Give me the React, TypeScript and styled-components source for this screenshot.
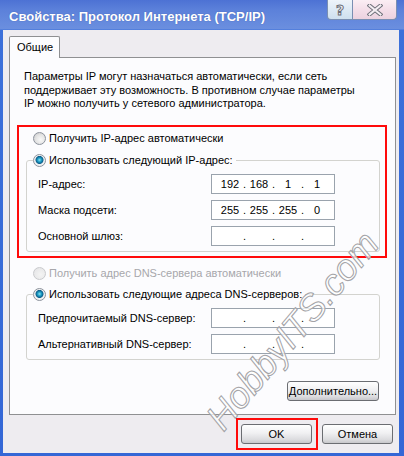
import React from "react";
import styled, { createGlobalStyle } from "styled-components";

const Global = createGlobalStyle`
  html, body { margin: 0; padding: 0; background: #ffffff; }
  body { font-family: "Liberation Sans", Arial, sans-serif; font-size: 11px; color: #000; }
  #root { width: 404px; height: 456px; }
`;

const Frame = styled.div`
  position: relative;
  width: 404px;
  height: 456px;
  box-sizing: border-box;
  padding: 0 5px 3px 3px;
  display: flex;
  flex-direction: column;
  overflow: hidden;
  background: linear-gradient(
    180deg,
    #4d72d4 0px,
    #5c81da 10px,
    #6b8fdf 29px,
    #3c70da 30px,
    #3467d6 100%
  );
`;

const TitleBar = styled.div`
  height: 30px;
  display: flex;
  align-items: flex-start;
  flex-shrink: 0;
`;

const TitleText = styled.div`
  margin: 9px 0 0 6px;
  font-family: "Liberation Sans", Arial, sans-serif;
  font-weight: bold;
  font-size: 13px;
  line-height: 15px;
  color: #ffffff;
  text-shadow: 0 0 1px rgba(30, 50, 120, 0.5);
  white-space: nowrap;
`;

const CaptionButtons = styled.div`
  margin-left: auto;
  margin-right: 2px;
  display: flex;
`;

const CaptionButton = styled.div<{ $kind: "help" | "close" }>`
  width: ${(p) => (p.$kind === "help" ? 26 : 44)}px;
  height: 20px;
  box-sizing: border-box;
  border: 1px solid #7a8fb2;
  border-top: none;
  ${(p) => (p.$kind === "close" ? "border-left: none;" : "")}
  border-radius: ${(p) => (p.$kind === "help" ? "0 0 0 4px" : "0 0 4px 0")};
  background: ${(p) =>
    p.$kind === "help"
      ? "linear-gradient(180deg, #eef4fa 0%, #dce9f4 55%, #cfe0ef 100%)"
      : "linear-gradient(180deg, #fbeef4 0%, #f3dde8 55%, #ecd2df 100%)"};
  display: flex;
  align-items: center;
  justify-content: center;
  font-family: "DejaVu Sans", sans-serif;
  font-weight: bold;
  font-size: 14px;
  color: #f4f6fa;
  -webkit-text-stroke: 1px #6d6f78;
`;

const Body = styled.div`
  flex: 1;
  background: #eeecf0;
  padding: 6px 3px 3px 6px;
  display: flex;
  flex-direction: column;
`;

const TabStrip = styled.div`
  display: flex;
  height: 22px;
  margin-bottom: -1px;
  position: relative;
  z-index: 1;
`;

const Tab = styled.div`
  width: 51px;
  box-sizing: border-box;
  border: 1px solid #8f9092;
  border-bottom: none;
  border-radius: 2px 2px 0 0;
  background: #fcfcfe;
  padding-left: 7px;
  line-height: 21px;
  font-size: 11px;
`;

const Panel = styled.div`
  border: 1px solid #8f9092;
  background: #fcfcfe;
  padding: 12px 8px 13px 7px;
  display: flex;
  flex-direction: column;
`;

const Intro = styled.p`
  margin: 0 0 14.5px 7px;
  line-height: 13.5px;
  font-size: 11px;
`;

const Annotation = styled.div`
  border: 2px solid #ff0a0a;
  padding: 4px 5px 4px 7px;
  display: flex;
  flex-direction: column;
`;

const RadioRow = styled.label<{ $indent: number; $top?: number; $disabled?: boolean }>`
  display: flex;
  align-items: center;
  gap: 3px;
  height: 14px;
  margin-left: ${(p) => p.$indent}px;
  margin-top: ${(p) => p.$top ?? 0}px;
  color: ${(p) => (p.$disabled ? "#a7a7ab" : "#000")};
  font-size: 11px;
  white-space: nowrap;
`;

const RadioDot = styled.span<{ $checked?: boolean; $disabled?: boolean }>`
  width: 13px;
  height: 13px;
  box-sizing: border-box;
  border-radius: 50%;
  flex-shrink: 0;
  border: 1px solid ${(p) => (p.$disabled ? "#c9cacd" : "#8c929c")};
  background: ${(p) =>
    p.$checked
      ? "radial-gradient(circle at 50% 45%, #8fe0f2 0px, #1a9cc4 2px, #0d5d8a 3.6px, #eef0f2 4.4px, #f6f6f6 100%)"
      : p.$disabled
      ? "radial-gradient(circle at 60% 60%, #f4f4f4 0px, #e2e2e4 100%)"
      : "radial-gradient(circle at 60% 60%, #f8f8f8 0px, #e4e4e4 50%, #c4c4c6 100%)"};
`;

const Group = styled.fieldset<{ $top: number; $side?: number; $right?: number }>`
  margin: ${(p) => p.$top}px ${(p) => p.$right ?? 0}px 0 ${(p) => p.$side ?? 0}px;
  padding: 7px 0 5px 0;
  border: 1px solid #d3d3cf;
  border-radius: 3px;
  min-width: 0;
  display: flex;
  flex-direction: column;
  gap: 6px;
`;

const GroupLegend = styled.legend`
  margin-left: 6px;
  padding: 0 3px 0 0;
  display: flex;
  align-items: center;
  gap: 3px;
  height: 14px;
  font-size: 11px;
  white-space: nowrap;
`;

const FieldRow = styled.div`
  display: flex;
  align-items: center;
  height: 20px;
  padding-left: 11px;
`;

const FieldLabel = styled.span`
  width: 173px;
  flex-shrink: 0;
  font-size: 11px;
  white-space: nowrap;
`;

const IpBox = styled.div`
  width: 124px;
  height: 20px;
  box-sizing: border-box;
  border: 1px solid #9aa3ad;
  background: #ffffff;
  padding-left: 7px;
  display: flex;
  align-items: center;
  font-size: 11px;
`;

const Octet = styled.span`
  width: 22px;
  text-align: center;
`;

const Dot = styled.span`
  width: 7px;
  text-align: center;
`;

const PushButton = styled.div<{ $w: number }>`
  width: ${(p) => p.$w}px;
  height: 20px;
  box-sizing: border-box;
  border: 1px solid #6b6d72;
  border-radius: 3px;
  background: linear-gradient(180deg, #ffffff 0%, #f0f0f2 45%, #dcdcdf 80%, #c7c7cb 100%);
  display: flex;
  align-items: center;
  justify-content: center;
  font-size: 11px;
  white-space: nowrap;
`;

const MoreRow = styled.div`
  display: flex;
  justify-content: flex-end;
  margin-top: 21px;
  padding-right: 8px;
`;

const Footer = styled.div`
  margin-top: 3px;
  display: flex;
  justify-content: flex-end;
  align-items: center;
  gap: 4px;
  padding-right: 3px;
`;

const OkMark = styled.div`
  border: 2px solid #ff0a0a;
  padding: 4px 4px 4px 3px;
  display: flex;
`;

const WatermarkAnchor = styled.div`
  position: absolute;
  left: 293px;
  top: 331px;
  width: 0;
  height: 0;
  pointer-events: none;
`;

const WatermarkText = styled.span`
  position: absolute;
  left: 0;
  top: 0;
  transform: translate(-50%, -50%) rotate(-50deg);
  font-family: "Liberation Sans", Arial, sans-serif;
  font-style: italic;
  font-size: 37px;
  color: rgba(255, 255, 255, 0.75);
  -webkit-text-stroke: 1px #a2a2a6;
  white-space: nowrap;
`;

const IpField: React.FC<{ parts?: string[] }> = ({ parts = ["", "", "", ""] }) => (
  <IpBox>
    <Octet>{parts[0]}</Octet>
    <Dot>.</Dot>
    <Octet>{parts[1]}</Octet>
    <Dot>.</Dot>
    <Octet>{parts[2]}</Octet>
    <Dot>.</Dot>
    <Octet>{parts[3]}</Octet>
  </IpBox>
);

export default function App() {
  return (
    <>
      <Global />
      <Frame>
        <TitleBar>
          <TitleText>Свойства: Протокол Интернета (TCP/IP)</TitleText>
          <CaptionButtons>
            <CaptionButton $kind="help">?</CaptionButton>
            <CaptionButton $kind="close">
              <svg width="16" height="12" viewBox="0 0 16 12">
                <path d="M2.5 1.5 L13.5 10.5 M13.5 1.5 L2.5 10.5" stroke="#6d6f78" strokeWidth="4" strokeLinecap="square" fill="none" />
                <path d="M2.5 1.5 L13.5 10.5 M13.5 1.5 L2.5 10.5" stroke="#f5eef3" strokeWidth="2" strokeLinecap="square" fill="none" />
              </svg>
            </CaptionButton>
          </CaptionButtons>
        </TitleBar>
        <Body>
          <TabStrip>
            <Tab>Общие</Tab>
          </TabStrip>
          <Panel>
            <Intro>
              Параметры IP могут назначаться автоматически, если сеть
              <br />
              поддерживает эту возможность. В противном случае параметры
              <br />
              IP можно получить у сетевого администратора.
            </Intro>
            <Annotation>
              <RadioRow $indent={7}>
                <RadioDot />
                Получить IP-адрес автоматически
              </RadioRow>
              <Group $top={8}>
                <GroupLegend>
                  <RadioDot $checked />
                  Использовать следующий IP-адрес:
                </GroupLegend>
                <FieldRow>
                  <FieldLabel>IP-адрес:</FieldLabel>
                  <IpField parts={["192", "168", "1", "1"]} />
                </FieldRow>
                <FieldRow>
                  <FieldLabel>Маска подсети:</FieldLabel>
                  <IpField parts={["255", "255", "255", "0"]} />
                </FieldRow>
                <FieldRow>
                  <FieldLabel>Основной шлюз:</FieldLabel>
                  <IpField />
                </FieldRow>
              </Group>
            </Annotation>
            <RadioRow $indent={16} $top={8} $disabled>
              <RadioDot $disabled />
              Получить адрес DNS-сервера автоматически
            </RadioRow>
            <Group $top={7} $side={9} $right={7}>
              <GroupLegend>
                <RadioDot $checked />
                Использовать следующие адреса DNS-серверов:
              </GroupLegend>
              <FieldRow>
                <FieldLabel>Предпочитаемый DNS-сервер:</FieldLabel>
                <IpField />
              </FieldRow>
              <FieldRow>
                <FieldLabel>Альтернативный DNS-сервер:</FieldLabel>
                <IpField />
              </FieldRow>
            </Group>
            <MoreRow>
              <PushButton $w={92}>Дополнительно...</PushButton>
            </MoreRow>
          </Panel>
          <Footer>
            <OkMark>
              <PushButton $w={71}>OK</PushButton>
            </OkMark>
            <PushButton $w={71}>Отмена</PushButton>
          </Footer>
        </Body>
        <WatermarkAnchor>
          <WatermarkText>HobbyITS.com</WatermarkText>
        </WatermarkAnchor>
      </Frame>
    </>
  );
}
